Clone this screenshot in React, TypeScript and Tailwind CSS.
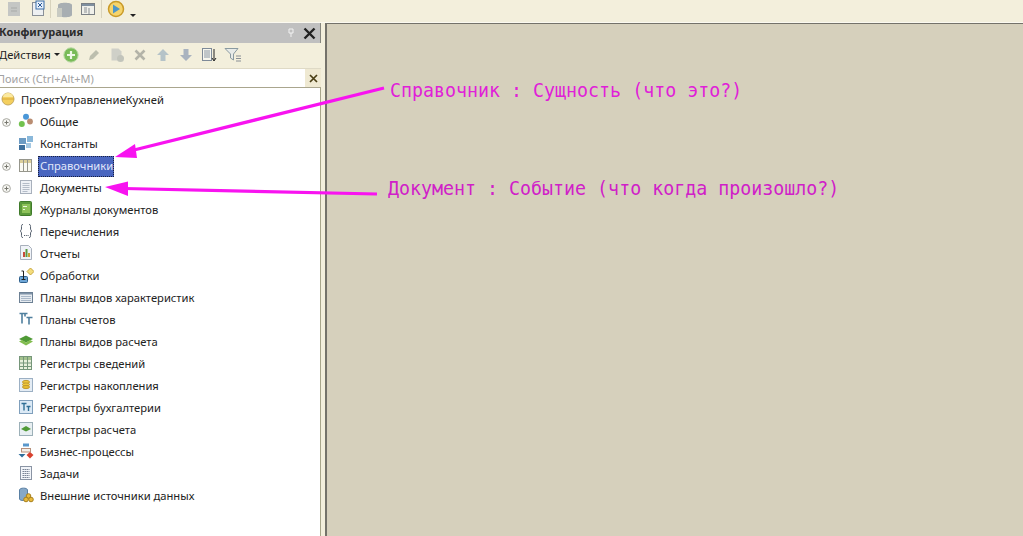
import React from "react";

const Plus = () => (
  <svg width="9" height="9" viewBox="0 0 9 9" className="shrink-0">
    <circle cx="4.500" cy="4.500" r="3.900" fill="#f6f6f2" stroke="#a8a8a2" strokeWidth="1" />
    <path d="M2.500 4.500h4M4.500 2.500v4" stroke="#77776f" strokeWidth="1" />
  </svg>
);

const S = ({ children }: { children: React.ReactNode }) => (
  <svg width="16" height="16" viewBox="0 0 16 16" className="shrink-0 mb-[2px]">{children}</svg>
);

const icons: Record<string, React.ReactNode> = {
  common: (<S><circle cx="8" cy="3.800" r="3" fill="#4a97d8" /><circle cx="3.800" cy="11" r="3" fill="#72c24e" /><circle cx="12" cy="8.500" r="2.900" fill="#b98d72" /></S>),
  const: (<S><rect x="1" y="3" width="7" height="6" fill="#6d9cc4" /><rect x="9" y="1" width="6" height="6" fill="#8ab8da" /><rect x="1" y="10" width="6" height="5" fill="#3f719e" /><rect x="8" y="8" width="5" height="5" fill="#a5c8e2" /></S>),
  cat: (<S><rect x="1.500" y="2.500" width="12" height="12" fill="#fbfaf2" stroke="#96968c" /><rect x="2" y="3" width="11" height="3" fill="#dccf9a" /><path d="M5.500 3v11M9.500 3v11" stroke="#96968c" /></S>),
  doc: (<S><rect x="2.500" y="1.500" width="11" height="13" fill="#eef1f6" stroke="#a8b0bc" /><path d="M4.500 4.500h7M4.500 6.500h7M4.500 8.500h7M4.500 10.500h7M4.500 12.500h5" stroke="#b4bcc8" /></S>),
  journal: (<S><rect x="1.500" y="0.500" width="12" height="14" rx="1" fill="#5c9a3c" stroke="#3f7a2a" /><rect x="4" y="3" width="8" height="9" fill="#8ec25a" /><path d="M5 5.500h4M5 8.500h2" stroke="#ecf7dd" strokeWidth="1.200" /></S>),
  enum: (<S><path d="M5 1.500C3 1.500 3.500 3 3.500 5S3 7.500 2 8c1 .5 1.500 1 1.500 3s-.5 3.500 1.500 3.500M11 1.500c2 0 1.500 1.500 1.500 3.500s.5 2.500 1.500 3c-1 .5-1.500 1-1.500 3s.5 3.500-1.500 3.500" fill="none" stroke="#55606e" /><path d="M6 12.500h1M7.800 12.500h1M9.600 12.500h1" stroke="#55606e" /></S>),
  report: (<S><path d="M2.500 0.500h8l3 3v11h-11z" fill="#f0f3f8" stroke="#a8b0bc" /><rect x="5" y="7" width="2" height="5" fill="#c84a3a" /><rect x="7.500" y="4" width="2" height="8" fill="#5b9a45" /><rect x="10" y="8" width="2" height="4" fill="#c9a23a" /></S>),
  proc: (<S><path d="M9 4.500l3.500-3.500 3.500 3.500-3.500 3.500z" fill="#f4dc7c" stroke="#c7a63c" /><rect x="1.500" y="9.500" width="8" height="6" rx="1" fill="#6ea6d6" stroke="#2d5f8c" /><path d="M3.500 12.500h4M5.500 4v8M3.500 4h2" stroke="#222" fill="none" /></S>),
  charts: (<S><rect x="1.500" y="3.500" width="13" height="10" fill="#e6ebf0" stroke="#6c8094" /><rect x="2" y="4" width="12" height="1.500" fill="#7f93a8" /><path d="M4 7v5M6 7v5M8 7v5M10 7v5M12 7v5" stroke="#6c84a0" strokeDasharray="1 1" /></S>),
  accounts: (<S><path d="M1.500 2.500h8M4 2.500v10M7 2.500v3M8.500 6.500h6M11 6.500v7" fill="none" stroke="#4f7f9e" strokeWidth="1.600" /></S>),
  calc: (<S><path d="M8 2.500l7 3.500-7 3.500L1 6z" fill="#4f9a36" /><path d="M1 8.500l3-1.500L8 9.500l4-2.500 3 1.500-7 4z" fill="#82bd50" /></S>),
  info: (<S><rect x="1.500" y="1.500" width="12" height="13" fill="#e8f0dc" stroke="#76967a" /><rect x="2" y="2" width="11" height="3" fill="#a4c28e" /><path d="M2 8h11M2 11.500h11M5.500 2v12M9.500 2v12" stroke="#76967a" /></S>),
  accum: (<S><rect x="1.500" y="1.500" width="13" height="13" fill="#e4ecf4" stroke="#9cb0c4" /><ellipse cx="8" cy="5" rx="3.500" ry="1.600" fill="#f0c83c" stroke="#c09a30" /><ellipse cx="8" cy="7.500" rx="3.500" ry="1.600" fill="#f0c83c" stroke="#c09a30" /><ellipse cx="8" cy="10" rx="3.500" ry="1.600" fill="#e8bc30" stroke="#c09a30" /></S>),
  book: (<S><rect x="1.500" y="1.500" width="13" height="13" fill="#dceaf6" stroke="#7f9fbc" /><path d="M3.500 4.500h5M6 4.500v7M8.500 7.500h4M10.500 7.500v4.500" fill="none" stroke="#2f6f96" strokeWidth="1.400" /></S>),
  calcreg: (<S><rect x="1.500" y="1.500" width="13" height="13" fill="#e8eff2" stroke="#9cb0b8" /><path d="M8 5l5 3-5 2.500L3 8z" fill="#4f9a36" /></S>),
  biz: (<S><rect x="5" y="0.500" width="6" height="3" fill="#5a98cc" /><rect x="3.500" y="5.500" width="9" height="3.500" fill="#f4f0ea" stroke="#b8907a" /><path d="M0.500 11h7l-3.500 3.500z" fill="#2f6f9c" /><path d="M12 9l3.500 3-3.500 3.500-3.500-3.500z" fill="#d8412f" /></S>),
  task: (<S><rect x="2.500" y="1.500" width="11" height="13" fill="#f2f5fa" stroke="#8a94a4" /><path d="M4.500 4.500h7M4.500 6.500h7M4.500 8.500h7M4.500 10.500h7M4.500 12.500h7" stroke="#7a8496" strokeDasharray="1.500 .5" /></S>),
  ext: (<S><path d="M1.500 3c0-2.500 8-2.500 8 0v9c0 2-8 2-8 0z" fill="#86a8c8" stroke="#5a80a4" /><circle cx="10.500" cy="9" r="2.300" fill="#e8b93c" stroke="#a8801c" /><circle cx="8" cy="12.500" r="2.300" fill="#e8b93c" stroke="#a8801c" /><circle cx="13" cy="12.500" r="2.300" fill="#e8b93c" stroke="#a8801c" /></S>),
};

const rows: { t: string; i: string; plus?: boolean; sel?: boolean }[] = [
  { t: "Общие", i: "common", plus: true },
  { t: "Константы", i: "const" },
  { t: "Справочники", i: "cat", plus: true, sel: true },
  { t: "Документы", i: "doc", plus: true },
  { t: "Журналы документов", i: "journal" },
  { t: "Перечисления", i: "enum" },
  { t: "Отчеты", i: "report" },
  { t: "Обработки", i: "proc" },
  { t: "Планы видов характеристик", i: "charts" },
  { t: "Планы счетов", i: "accounts" },
  { t: "Планы видов расчета", i: "calc" },
  { t: "Регистры сведений", i: "info" },
  { t: "Регистры накопления", i: "accum" },
  { t: "Регистры бухгалтерии", i: "book" },
  { t: "Регистры расчета", i: "calcreg" },
  { t: "Бизнес-процессы", i: "biz" },
  { t: "Задачи", i: "task" },
  { t: "Внешние источники данных", i: "ext" },
];

export default function App() {
  return (
    <div className="relative w-[1023px] h-[536px] overflow-hidden bg-[#f3efdc] flex flex-col font-['Noto_Sans','Open_Sans',sans-serif] text-[11.2px] text-[#222]">
      {/* top toolbar */}
      <div className="h-[23px] shrink-0 flex items-center pl-[7px] pb-[5px] border-b border-[#fbf9f0]">
        <svg width="14" height="16" viewBox="0 0 14 16"><rect x="1" y="1" width="12" height="14" fill="#c4c6c4" /><path d="M4 7h6M4 10h6" stroke="#a8aaa8" /></svg>
        <svg className="ml-[9px]" width="18" height="18" viewBox="0 0 18 18"><rect x="2.500" y="2.500" width="11" height="13" fill="#eef0f2" stroke="#8a9098" /><rect x="6" y="1" width="8" height="8" fill="#e8f0fa" stroke="#3a6ea8" /><path d="M8 3l4 4M12 3l-4 4" stroke="#2a5a98" /></svg>
        <div className="ml-[2px] w-px h-[18px] bg-[#d8d3bd]" />
        <svg className="ml-[6px]" width="16" height="18" viewBox="0 0 16 18"><path d="M1 5c0-3 14-3 14 0v10c0 3-14 3-14 0z" fill="#a8aeb2" /><rect x="0" y="8" width="5" height="9" fill="#c8cac2" /></svg>
        <svg className="ml-[8px]" width="14" height="14" viewBox="0 0 14 14"><rect x=".5" y="1.500" width="13" height="11" fill="#f0f0ea" stroke="#7a7f84" /><rect x="1" y="2" width="12" height="2" fill="#7f8f9f" /><path d="M3 6h3M3 8h3M3 10h3M8 6v6" stroke="#8a8f94" /></svg>
        <div className="ml-[6px] w-px h-[18px] bg-[#d8d3bd]" />
        <div className="ml-[5px] flex items-end">
          <svg width="18" height="18" viewBox="0 0 18 18"><circle cx="9" cy="9" r="7.500" fill="#f6d46c" stroke="#c99a28" strokeWidth="1.500" /><path d="M6 4.500l7 4.500-7 4.500z" fill="#4f96c8" /></svg>
          <span className="ml-[5px] mb-[1px] w-0 h-0 border-x-[3px] border-x-transparent border-t-[3px] border-t-[#222]" />
        </div>
      </div>

      <div className="flex flex-1 min-h-0">
        {/* left panel */}
        <div className="w-[321px] shrink-0 flex flex-col">
          <div className="h-[20px] shrink-0 bg-[#c0c0c0] flex items-center justify-between pr-[4px] border-r border-[#86867e]">
            <span className="font-bold text-[11px] leading-none -ml-px mb-[3px] text-[#2b2b2b]">Конфигурация</span>
            <div className="flex items-center gap-[9px]">
              <svg width="6" height="10" viewBox="0 0 6 10"><path d="M1 1h4v4H1zM3 5v4" fill="none" stroke="#f2f2f2" /></svg>
              <svg width="13" height="13" viewBox="0 0 13 13"><path d="M1.500 1.500l10 10M11.500 1.500l-10 10" stroke="#222" strokeWidth="2.400" /></svg>
            </div>
          </div>
          <div className="h-[25px] shrink-0 flex items-center pb-[2px]">
            <span className="leading-none -ml-px">Действия</span>
            <span className="ml-[3px] w-0 h-0 border-x-[3px] border-x-transparent border-t-[3px] border-t-[#222]" />
            <div className="ml-[3px] flex items-center gap-[7px]">
              <svg width="16" height="16" viewBox="0 0 16 16"><circle cx="8" cy="8" r="7.200" fill="#79bb58" stroke="#bcd9a8" /><path d="M4 8h8M8 4v8" stroke="#eef8e6" strokeWidth="2.200" /></svg>
              <svg width="16" height="16" viewBox="0 0 16 16"><path d="M3 13l1-4 6-6 3 3-6 6z" fill="#bcbeae" /></svg>
              <svg width="16" height="16" viewBox="0 0 16 16"><path d="M2.500 1.500h7l3 3v9h-10z" fill="#cfd0c8" /><circle cx="11.500" cy="11.500" r="3.500" fill="#c2c4bb" /></svg>
              <svg width="16" height="16" viewBox="0 0 16 16"><path d="M3.500 3.500l9 9M12.500 3.500l-9 9" stroke="#b3b3a8" strokeWidth="2.600" /></svg>
              <svg width="16" height="16" viewBox="0 0 16 16"><path d="M8 2l6 6h-3.500v6h-5V8H2z" fill="#b5c3c8" /></svg>
              <svg width="16" height="16" viewBox="0 0 16 16"><path d="M8 14L2 8h3.500V2h5v6H14z" fill="#a9b3bf" /></svg>
              <svg width="16" height="16" viewBox="0 0 16 16"><rect x="1.500" y="1.500" width="9" height="12" fill="#f6f6ee" stroke="#7e8a98" /><path d="M3 4h6M3 6h6M3 8h6M3 10h6" stroke="#8a96a4" /><path d="M13 2v11M11 11l2 3 2-3" fill="none" stroke="#222" /></svg>
              <svg width="18" height="16" viewBox="0 0 18 16"><path d="M1 1.500h13L9.500 7v6l-3-2V7z" fill="#e8ebe8" stroke="#8a9aa0" /><path d="M12 9h5M12 11.500h5M12 14h5" stroke="#8a9096" /></svg>
            </div>
          </div>
          <div className="h-[20px] shrink-0 flex border-y border-t-[#dfdac6] border-b-[#aaa68e]">
            <div className="flex-1 overflow-hidden bg-white flex items-center pt-px text-[#a2a2a2] text-[11px] leading-none whitespace-nowrap"><span className="-ml-[3px]">Поиск (Ctrl+Alt+M)</span></div>
            <div className="w-[16px] bg-[#efe9d2] flex items-center justify-center">
              <svg width="9" height="9" viewBox="0 0 9 9"><path d="M1 1l7 7M8 1L1 8" stroke="#4a3e14" strokeWidth="1.700" /></svg>
            </div>
          </div>
          <div className="flex-1 bg-white border-r border-[#a8a68a] flex flex-col pt-px">
            <div className="h-[22px] shrink-0 flex items-center pl-px gap-[6px]">
              <svg className="mb-[3px]" width="14" height="14" viewBox="0 0 14 14"><circle cx="7" cy="7" r="6" fill="#f4cf5e" stroke="#c4a960" /><path d="M1 7h12" stroke="#d8a93a" /><path d="M2 5a5 4 0 0 1 10 0z" fill="#fbe9a0" /></svg>
              <span className="leading-none">ПроектУправлениеКухней</span>
            </div>
            {rows.map((r) => (
              <div key={r.t} className="h-[22px] shrink-0 flex items-center">
                <div className="w-[18px] shrink-0 flex pl-[2px]">{r.plus && <Plus />}</div>
                {icons[r.i]}
                <span className={r.sel ? "ml-[4px] pl-[1px] h-[21px] flex items-center bg-[#4a66c0] text-[#e0e6fa] border border-dotted border-[#1a2040] leading-none" : "ml-[6px] leading-none"}>{r.t}</span>
              </div>
            ))}
          </div>
        </div>
        {/* right area */}
        <div className="flex-1 min-w-0 pl-[4px]">
          <div className="h-full bg-[#d6d0bc] border-l-2 border-t border-[#74726a]" />
        </div>
      </div>

      {/* annotations */}
      <svg className="absolute inset-0 pointer-events-none" width="1023" height="536">
        <path d="M384 88L130 151" stroke="#f813f0" strokeWidth="3.200" fill="none" />
        <path d="M115 157L135 144L137 158z" fill="#f813f0" />
        <path d="M377 194L124 188.500" stroke="#f813f0" strokeWidth="3.200" fill="none" />
        <path d="M105 187L128 181.500L128 196z" fill="#f813f0" />
      </svg>
      <div className="absolute left-[390px] top-[78px] font-['DejaVu_Sans_Mono',monospace] text-[18.3px] leading-[24px] text-[#e020d8] whitespace-pre scale-y-110">Справочник : Сущность (что это?)</div>
      <div className="absolute left-[388px] top-[176px] font-['DejaVu_Sans_Mono',monospace] text-[18.3px] leading-[24px] text-[#d020c8] whitespace-pre scale-y-110">Документ : Событие (что когда произошло?)</div>
    </div>
  );
}
